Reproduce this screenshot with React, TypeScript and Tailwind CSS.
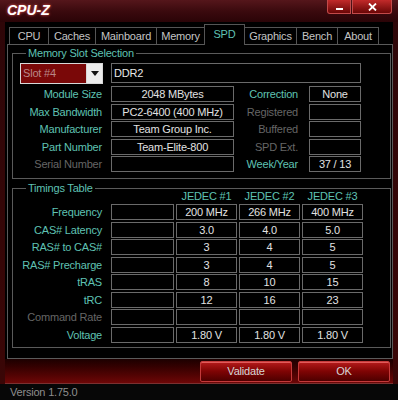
import React from 'react';

const tabs = ['CPU', 'Caches', 'Mainboard', 'Memory', 'SPD', 'Graphics', 'Bench', 'About'];
const tabWidths: Record<string, string> = {
  CPU: 'w-[40px]',
  Caches: 'w-[47px]',
  Mainboard: 'w-[61px]',
  Memory: 'w-[48px]',
  SPD: 'w-[41px]',
  Graphics: 'w-[52px]',
  Bench: 'w-[41px]',
  About: 'w-[41px]',
};

const slotRows = [
  { label: 'Module Size', on: true, value: '2048 MBytes', right: 'Correction', rightOn: true, rightValue: 'None' },
  { label: 'Max Bandwidth', on: true, value: 'PC2-6400 (400 MHz)', right: 'Registered', rightOn: false, rightValue: '' },
  { label: 'Manufacturer', on: true, value: 'Team Group Inc.', right: 'Buffered', rightOn: false, rightValue: '' },
  { label: 'Part Number', on: true, value: 'Team-Elite-800', right: 'SPD Ext.', rightOn: false, rightValue: '' },
  { label: 'Serial Number', on: false, value: '', right: 'Week/Year', rightOn: true, rightValue: '37 / 13' },
];

const timings = [
  { label: 'Frequency', on: true, v: ['200 MHz', '266 MHz', '400 MHz'] },
  { label: 'CAS# Latency', on: true, v: ['3.0', '4.0', '5.0'] },
  { label: 'RAS# to CAS#', on: true, v: ['3', '4', '5'] },
  { label: 'RAS# Precharge', on: true, v: ['3', '4', '5'] },
  { label: 'tRAS', on: true, v: ['8', '10', '15'] },
  { label: 'tRC', on: true, v: ['12', '16', '23'] },
  { label: 'Command Rate', on: false, v: ['', '', ''] },
  { label: 'Voltage', on: true, v: ['1.80 V', '1.80 V', '1.80 V'] },
];

function Label({ text, on, w }: { text: string; on: boolean; w: string }) {
  return (
    <div className={`${w} shrink-0 text-right leading-[16px] ${on ? 'text-[#5fc2b3]' : 'text-[#666666]'}`}>
      {text}
    </div>
  );
}

function Box({ text, w, ml }: { text: string; w: string; ml: string }) {
  return (
    <div
      className={`${w} ${ml} h-[16px] shrink-0 border border-[#6a6a6a] text-center leading-[14px] text-[#e2e2e2]`}
    >
      {text}
    </div>
  );
}

function GroupTitle({ text }: { text: string }) {
  return (
    <div className="ml-[13px] -mt-[7px] -mb-[6px] h-[13px] w-fit bg-black px-[2px] leading-[13px] text-[#5fc2b3]">
      {text}
    </div>
  );
}

function RedButton({ text }: { text: string }) {
  return (
    <div className="flex h-[21px] w-[92px] items-center justify-center rounded-[2px] border border-[#c43a3a] bg-gradient-to-b from-[#b51a1a] via-[#7e0404] to-[#4e0000] text-[#d6d6d6] shadow-[inset_0_1px_0_#e25a5a]">
      {text}
    </div>
  );
}

export default function App() {
  return (
    <div className="flex h-[400px] w-[398px] flex-col overflow-hidden bg-[#260405] font-['Liberation_Sans',Arial,sans-serif] text-[11px] tracking-[-0.2px]">
      {/* title bar */}
      <div className="flex h-[22px] items-start bg-gradient-to-b from-[#55161b] via-[#3b0a0e] to-[#2a0407]">
        <div className="ml-[7px] pt-[2px] text-[14px] leading-[16px] font-bold italic tracking-normal text-white [text-shadow:0_0_3px_#ff5a5a]">
          CPU-Z
        </div>
        <div className="ml-auto mr-[6px] flex">
          <div className="flex h-[14px] w-[24px] items-end justify-center rounded-bl-[3px] border border-t-0 border-[#c24a4a] bg-gradient-to-b from-[#c22a2a] to-[#6a0606] pb-[3px]">
            <div className="h-[2px] w-[7px] bg-white" />
          </div>
          <div className="ml-[1px] flex h-[14px] w-[40px] items-center justify-center rounded-br-[3px] border border-t-0 border-[#c24a4a] bg-gradient-to-b from-[#c22a2a] to-[#6a0606]">
            <svg width="9" height="8" viewBox="0 0 9 8">
              <path d="M1 0.5 L8 7.5 M8 0.5 L1 7.5" stroke="white" strokeWidth="1.8" />
            </svg>
          </div>
        </div>
      </div>

      <div className="flex h-[362px]">
        <div className="w-[5px] bg-gradient-to-b from-[#2e0608] to-[#3a0606]" />
        <div className="flex w-[388px] flex-col bg-black">
          {/* tabs */}
          <div className="flex h-[22px] items-end pl-[4px]">
            {tabs.map((t, i) => {
              const active = t === 'SPD';
              return (
                <div
                  key={t}
                  className={`${tabWidths[t]} flex shrink-0 items-center justify-center border-t border-r border-[#555555] ${
                    i === 0 ? 'border-l' : ''
                  } ${
                    active
                      ? 'relative z-10 -mb-px -ml-px h-[21px] border-l bg-black pb-[2px] text-[#5fc2b3]'
                      : 'h-[17px] text-[#c4c4c4]'
                  }`}
                >
                  {t}
                </div>
              );
            })}
          </div>

          {/* panel */}
          <div className="ml-[2px] box-border h-[315px] w-[386px] border border-[#5a5a5a] pt-[8px] pl-[4px]">
            {/* memory slot selection */}
            <div className="box-border flex h-[126px] w-[379px] flex-col border border-[#5a5a5a]">
              <GroupTitle text="Memory Slot Selection" />
              <div className="mt-[9px] flex h-[21px] items-start">
                <div className="ml-[7px] flex h-[21px] w-[83px] border border-[#d8d8d8] bg-[#7a0808]">
                  <div className="flex-1 pl-[2px] leading-[19px] text-[#b98787]">Slot #4</div>
                  <div className="flex w-[16px] items-center justify-center border-l border-[#d8d8d8] bg-[#ececec]">
                    <svg width="8" height="5" viewBox="0 0 8 5">
                      <polygon points="0,0 8,0 4,5" fill="#111" />
                    </svg>
                  </div>
                </div>
                <div className="ml-[8px] h-[20px] w-[250px] border border-[#6a6a6a] pl-[2px] leading-[18px] text-[#e8e8e8]">
                  DDR2
                </div>
              </div>
              <div className="mt-[2px] flex flex-col gap-y-[1.5px]">
                {slotRows.map((r) => (
                  <div key={r.label} className="flex h-[16px]">
                    <Label text={r.label} on={r.on} w="w-[89px]" />
                    <Box text={r.value} w="w-[123px]" ml="ml-[9px]" />
                    <Label text={r.right} on={r.rightOn} w="w-[64px]" />
                    <Box text={r.rightValue} w="w-[52px]" ml="ml-[11px]" />
                  </div>
                ))}
              </div>
            </div>

            {/* timings table */}
            <div className="mt-[9px] box-border flex h-[160px] w-[379px] flex-col border border-[#5a5a5a]">
              <GroupTitle text="Timings Table" />
              <div className="flex h-[15px] items-center">
                <div className="w-[161px] shrink-0" />
                {['JEDEC #1', 'JEDEC #2', 'JEDEC #3'].map((h) => (
                  <div key={h} className="ml-[2px] w-[61px] shrink-0 text-center text-[#5fc2b3]">
                    {h}
                  </div>
                ))}
              </div>
              <div className="flex flex-col gap-y-[1.5px]">
                {timings.map((r) => (
                  <div key={r.label} className="flex h-[16px]">
                    <Label text={r.label} on={r.on} w="w-[89px]" />
                    <Box text="" w="w-[63px]" ml="ml-[9px]" />
                    {r.v.map((v, i) => (
                      <Box key={i} text={v} w="w-[61px]" ml="ml-[2px]" />
                    ))}
                  </div>
                ))}
              </div>
            </div>
          </div>

          {/* bottom buttons */}
          <div className="flex h-[25px] items-start gap-[6px] border-b border-[#7a3030] bg-gradient-to-b from-[#1c0000] to-[#6e0707] pt-[2px] pl-[195px]">
            <RedButton text="Validate" />
            <RedButton text="OK" />
          </div>
        </div>
        <div className="w-[5px] bg-gradient-to-b from-[#2e0608] to-[#3a0606]" />
      </div>

      {/* status bar */}
      <div className="flex h-[16px] items-center bg-[#070707] pl-[10px] text-[#8e8e8e]">Version 1.75.0</div>
    </div>
  );
}
